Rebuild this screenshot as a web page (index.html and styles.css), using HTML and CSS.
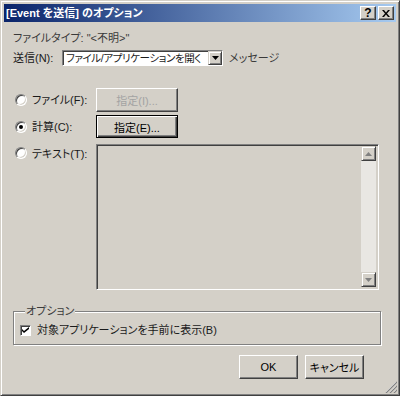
FILE: index.html
```html
<!DOCTYPE html>
<html lang="ja">
<head>
  <meta charset="UTF-8">
  <title>[Event を送信] のオプション</title>
  <link rel="stylesheet" href="styles.css">
</head>
<body>

  <div class="window">
    <div class="titlebar">
      <span class="title">[Event を送信] のオプション</span>
      <div class="caption-btns">
        <span class="cbtn help">?</span>
        <span class="cbtn close">
          <svg width="8" height="7" viewBox="0 0 8 7"><path d="M0 0h2l2 2.5L6 0h2L5 3.5 8 7H6L4 4.5 2 7H0l3-3.5z" fill="#000"/></svg>
        </span>
      </div>
    </div>

    <div class="content">
      <div class="filetype">ファイルタイプ: "&lt;不明&gt;"</div>

      <div class="send-row">
        <span class="lbl send-lbl">送信(N):</span>
        <div class="combo">
          <span class="combo-text">ファイル/アプリケーションを開く</span>
          <span class="combo-btn"><svg width="7" height="4" viewBox="0 0 7 4"><path d="M0 0h7L3.5 4z" fill="#000"/></svg></span>
        </div>
        <span class="lbl muted">メッセージ</span>
      </div>

      <div class="choices">
        <label class="choice"><span class="radio"></span>ファイル(F):</label>
        <button class="btn disabled">指定(I)...</button>

        <label class="choice"><span class="radio on"></span>計算(C):</label>
        <button class="btn default">指定(E)...</button>

        <label class="choice top"><span class="radio"></span>テキスト(T):</label>
        <div class="textbox">
          <div class="vscroll">
            <span class="sbtn"><svg width="7" height="4" viewBox="0 0 7 4"><path d="M3.5 0L7 4H0z" fill="#808080"/></svg></span>
            <span class="track"></span>
            <span class="sbtn"><svg width="7" height="4" viewBox="0 0 7 4"><path d="M0 0h7L3.5 4z" fill="#808080"/></svg></span>
          </div>
        </div>
      </div>

      <fieldset class="group">
        <legend>オプション</legend>
        <label class="check-row"><span class="checkbox"><svg width="7" height="7" viewBox="0 0 7 7"><path d="M0 2l2 2 5-4v2L2 6 0 4z" fill="#000"/></svg></span>対象アプリケーションを手前に表示(B)</label>
      </fieldset>

      <div class="actions">
        <button class="btn wide">OK</button>
        <button class="btn wide">キャンセル</button>
      </div>
    </div>

    <svg class="grip" width="12" height="12" viewBox="0 0 12 12">
      <path d="M11 1L1 11M11 5L5 11M11 9L9 11" stroke="#fff" stroke-width="1"/>
      <path d="M12 1L1 12M12 5L5 12M12 9L9 12" stroke="#808080" stroke-width="1.2"/>
    </svg>
  </div>

</body>
</html>
```

FILE: styles.css
```css
body {
  margin: 0;
  padding: 0;
  background: #d4d0c8;
  font-family: "Liberation Sans", "Noto Sans CJK JP", sans-serif;
  font-size: 11px;
  font-feature-settings: "palt";
  color: #1a1a1a;
}
.window {
  position: relative;
  width: 400px;
  height: 396px;
  box-sizing: border-box;
  background: #d4d0c8;
  border: 1px solid;
  border-color: #d4d0c8 #404040 #404040 #d4d0c8;
  box-shadow: inset 1px 1px #fff, inset -1px -1px #808080;
  padding: 3px;
}
.titlebar {
  height: 18px;
  display: flex;
  align-items: center;
  justify-content: space-between;
  padding: 0 2px 0 2px;
  background: linear-gradient(to right, #0a246a, #a6caf0);
}
.title {
  color: #fff;
  font-weight: bold;
  font-size: 11px;
  line-height: 18px;
}
.caption-btns {
  display: flex;
  gap: 2px;
}
.cbtn {
  width: 16px;
  height: 14px;
  box-sizing: border-box;
  display: flex;
  align-items: center;
  justify-content: center;
  background: #d4d0c8;
  border: 1px solid;
  border-color: #fff #404040 #404040 #fff;
  box-shadow: inset -1px -1px #808080;
  font-family: "Liberation Sans", sans-serif;
  font-weight: bold;
  font-size: 12px;
  color: #000;
}
.content {
  padding: 0 15px 0 9px;
}
.filetype {
  margin-top: 9px;
  line-height: 14px;
  color: #3a3a3a;
}
.send-row {
  margin-top: 5px;
  display: flex;
  align-items: center;
  height: 16px;
}
.lbl {
  line-height: 14px;
}
.send-lbl {
  width: 49px;
}
.muted {
  color: #3a3a3a;
  margin-left: 6px;
}
.combo {
  width: 161px;
  height: 16px;
  box-sizing: border-box;
  display: flex;
  align-items: center;
  background: #fff;
  border: 1px solid;
  border-color: #808080 #fff #fff #808080;
  box-shadow: inset 1px 1px #404040;
}
.combo-text {
  flex: 1;
  padding-left: 3px;
  white-space: nowrap;
  overflow: hidden;
  line-height: 14px;
  font-size: 10.5px;
  letter-spacing: -0.4px;
}
.combo-btn {
  width: 14px;
  height: 14px;
  box-sizing: border-box;
  display: flex;
  align-items: center;
  justify-content: center;
  background: #d4d0c8;
  border: 1px solid;
  border-color: #d4d0c8 #404040 #404040 #d4d0c8;
  box-shadow: inset 1px 1px #fff, inset -1px -1px #808080;
}
.choices {
  margin-top: 22px;
  display: grid;
  grid-template-columns: 83px 283px;
  grid-template-rows: 24px 23px 149px;
  row-gap: 3px;
}
.choices .textbox {
  margin-top: 3px;
}
.choices .choice.top {
  margin-top: 3px;
}
.choice {
  display: flex;
  align-items: center;
  padding-left: 2px;
  gap: 5px;
  line-height: 14px;
}
.choice.top {
  align-items: flex-start;
  padding-top: 3px;
}
.radio {
  width: 12px;
  height: 12px;
  box-sizing: border-box;
  border-radius: 50%;
  background: #fff;
  border: 1px solid;
  border-color: #808080 #fff #fff #808080;
  box-shadow: inset 1px 1px #404040, inset -1px -1px #d4d0c8;
  position: relative;
}
.radio.on::after {
  content: "";
  position: absolute;
  left: 3px;
  top: 3px;
  width: 4px;
  height: 4px;
  border-radius: 50%;
  background: #000;
}
.btn {
  font: inherit;
  font-size: 11px;
  color: #000;
  background: #d4d0c8;
  padding: 0;
  box-sizing: border-box;
  border: 1px solid;
  border-color: #fff #404040 #404040 #fff;
  box-shadow: inset -1px -1px #808080;
  width: 82px;
  height: 100%;
}
.btn.disabled {
  color: #a3a3a3;
}
.btn.default {
  border-color: #000;
  box-shadow: inset 1px 1px #fff, inset -1px -1px #404040, inset -2px -2px #808080;
}
.textbox {
  width: 283px;
  box-sizing: border-box;
  display: flex;
  justify-content: flex-end;
  border: 1px solid;
  border-color: #808080 #fff #fff #808080;
  box-shadow: inset 1px 1px #404040, inset -1px -1px #d4d0c8;
  padding: 1px 2px 2px 1px;
}
.vscroll {
  width: 15px;
  display: flex;
  flex-direction: column;
}
.sbtn {
  height: 15px;
  box-sizing: border-box;
  display: flex;
  align-items: center;
  justify-content: center;
  background: #d4d0c8;
  border: 1px solid;
  border-color: #d4d0c8 #404040 #404040 #d4d0c8;
  box-shadow: inset 1px 1px #fff, inset -1px -1px #808080;
}
.track {
  flex: 1;
  background: #e9e7e3;
}
.group {
  margin: 14px 0 0 0;
  padding: 4px 6px 6px 6px;
  min-width: 0;
  border: 1px solid #808080;
  box-shadow: inset 1px 1px #fff, 1px 1px #fff;
}
.group legend {
  padding: 0 1px;
  margin-left: 5px;
  line-height: 14px;
  background: #d4d0c8;
  color: #3a3a3a;
}
.check-row {
  display: flex;
  align-items: center;
  gap: 6px;
  height: 16px;
  line-height: 14px;
}
.checkbox {
  width: 11px;
  height: 11px;
  box-sizing: border-box;
  display: flex;
  align-items: center;
  justify-content: center;
  background: #fff;
  border: 1px solid;
  border-color: #808080 #fff #fff #808080;
  box-shadow: inset 1px 1px #404040;
}
.actions {
  margin-top: 10px;
  display: flex;
  justify-content: flex-end;
  gap: 7px;
  padding-right: 17px;
  height: 24px;
}
.btn.wide {
  width: 59px;
}
.grip {
  position: absolute;
  right: 2px;
  bottom: 2px;
}
```
